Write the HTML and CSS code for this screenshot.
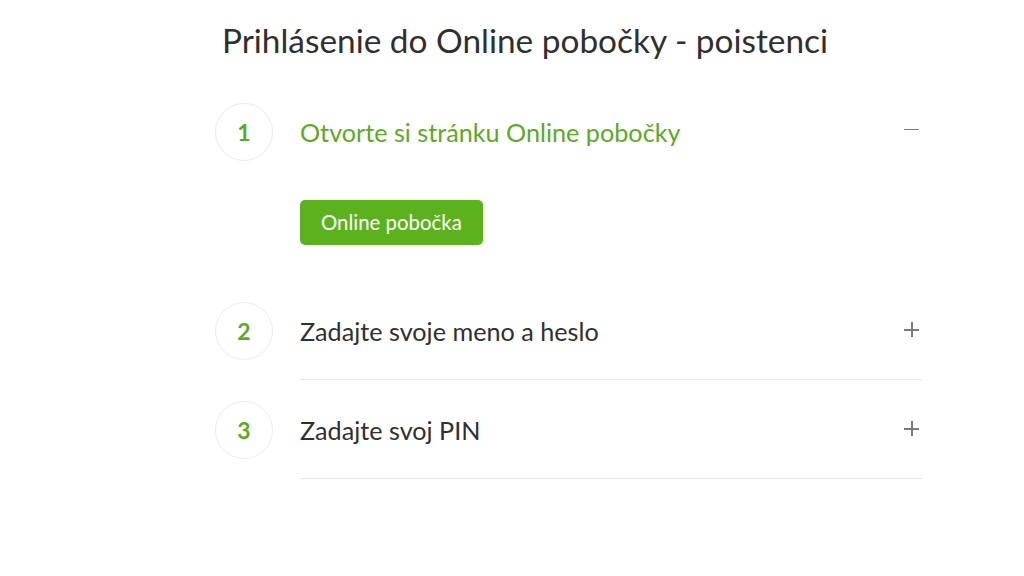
FILE: index.html
```html
<!DOCTYPE html>
<html lang="sk">
<head>
<meta charset="utf-8">
<title>Prihlásenie do Online pobočky - poistenci</title>
<link rel="stylesheet" href="styles.css">
</head>
<body>
<main class="page">
  <h1 class="title">Prihlásenie do Online pobočky - poistenci</h1>
  <ol class="steps">
    <li class="step step-open">
      <div class="step-head">
        <span class="num">1</span>
        <span class="label">Otvorte si stránku Online pobočky</span>
        <span class="toggle minus"></span>
      </div>
      <div class="step-body">
        <a class="btn" href="#">Online pobočka</a>
      </div>
    </li>
    <li class="step">
      <div class="step-head">
        <span class="num">2</span>
        <span class="label">Zadajte svoje meno a heslo</span>
        <span class="toggle plus"></span>
      </div>
    </li>
    <li class="step">
      <div class="step-head">
        <span class="num">3</span>
        <span class="label">Zadajte svoj PIN</span>
        <span class="toggle plus"></span>
      </div>
    </li>
  </ol>
</main>
</body>
</html>
```
FILE: styles.css
```css
* { box-sizing: border-box; }
html, body { margin: 0; padding: 0; background: #fff; }
body {
  font-family: Lato, "Open Sans", sans-serif;
  color: #333;
}
.page {
  width: 1024px;
  height: 576px;
  padding-top: 18px;
}
.title {
  margin: 0;
  text-align: center;
  font-weight: 400;
  font-size: 33.4px;
  line-height: 44px;
  color: #2f2f2f;
  padding-left: 26px;
}
.steps {
  list-style: none;
  margin: 41px 0 0 215px;
  padding: 0;
  width: 707px;
}
.step-head {
  display: flex;
  align-items: center;
  height: 58px;
}
.num {
  width: 58px;
  height: 58px;
  border: 1px solid #ececec;
  border-radius: 50%;
  display: flex;
  align-items: center;
  justify-content: center;
  color: #5aab1e;
  font-weight: 700;
  font-size: 23px;
  flex: none;
}
.label {
  flex: 1;
  margin-left: 27px;
  font-size: 25.2px;
  color: #303030;
}
.step-open .label { color: #5aab1e; }
.toggle {
  position: relative;
  width: 15px;
  height: 15px;
  margin-right: 3px;
  flex: none;
}
.toggle::before, .toggle::after {
  content: "";
  position: absolute;
  background: #7a7a7a;
}
.toggle::before {
  left: 0; right: 0; top: 7px; height: 1.5px;
}
.plus { margin-top: -3px; }
.plus::after {
  top: 0; bottom: 0; left: 7px; width: 1.5px;
}
.minus { margin-top: -6px; }
.step-body {
  padding: 39px 0 57px 85px;
}
.btn {
  display: inline-block;
  background: #5cb21c;
  color: #fff;
  text-decoration: none;
  font-size: 20.4px;
  line-height: 45px;
  height: 45px;
  padding: 0 21px;
  border-radius: 5px;
}
.step:not(.step-open) {
  padding-bottom: 20px;
}
.step:not(.step-open)::after {
  content: "";
  display: block;
  margin-left: 85px;
  border-bottom: 1px solid #e6e6e6;
  transform: translateY(19px);
}
.step:nth-child(3) { padding-top: 20px; }
```
